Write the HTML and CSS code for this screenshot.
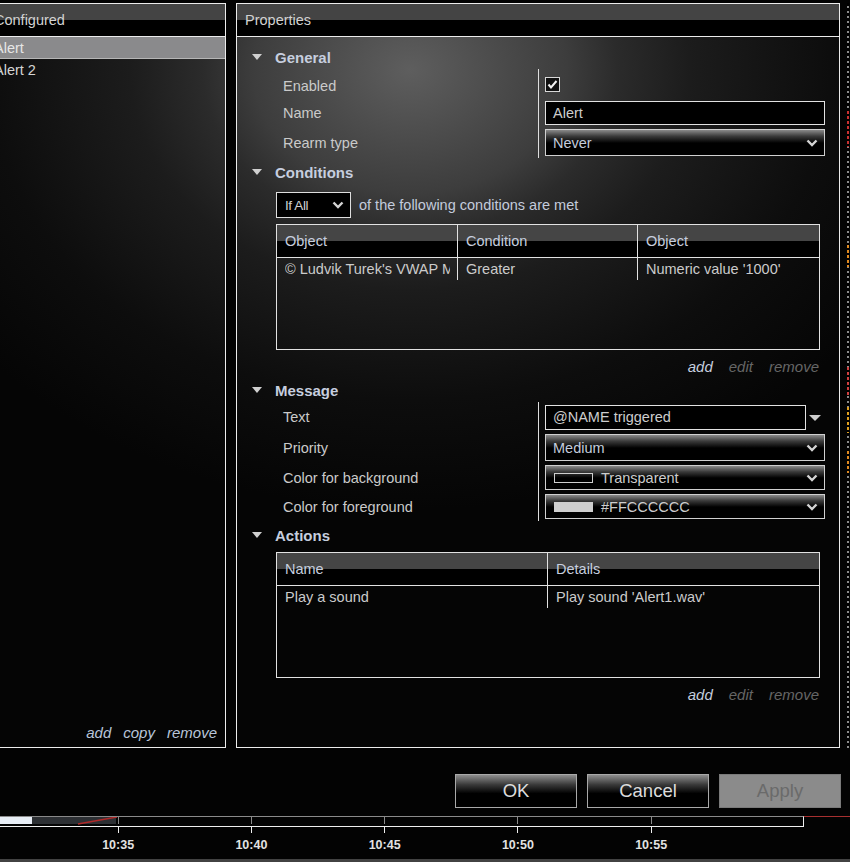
FILE: index.html
```html
<!DOCTYPE html>
<html lang="en">
<head>
<meta charset="UTF-8" />
<meta name="viewport" content="width=device-width, initial-scale=1" />
<title>Alerts</title>
<link rel="stylesheet" href="styles.css">
</head>
<body>

<div class="panels">

  <!-- Configured alerts -->
  <div class="panel list">
    <div class="panel-head">Configured</div>
    <div class="item sel">Alert</div>
    <div class="item">Alert 2</div>
    <div class="list-foot">
      <span>add</span><span>copy</span><span>remove</span>
    </div>
  </div>

  <!-- Properties -->
  <div class="panel props">
    <div class="panel-head">Properties</div>
    <div class="props-body">

      <div class="sec first">General</div>
      <div class="rows">
        <div class="lbl low">Enabled</div>
        <div class="ed tall">
          <span class="check">
            <svg width="13" height="13" viewBox="0 0 13 13"><path d="M2.5 6.5 L5 9.5 L10.5 3" fill="none" stroke="#f2f2f2" stroke-width="2"/></svg>
          </span>
        </div>
        <div class="lbl">Name</div>
        <div class="ed"><div class="input">Alert</div></div>
        <div class="lbl">Rearm type</div>
        <div class="ed">
          <div class="select blue">Never
            <svg class="chev" width="12" height="8" viewBox="0 0 12 8"><polyline points="1.5,1.5 6,6 10.5,1.5" fill="none" stroke="#d4d4d4" stroke-width="2.4"/></svg>
          </div>
        </div>
      </div>

      <div class="sec">Conditions</div>
      <div class="cond-line">
        <div class="mini-select">If All
          <svg class="chev" width="12" height="8" viewBox="0 0 12 8"><polyline points="1.5,1.5 6,6 10.5,1.5" fill="none" stroke="#d4d4d4" stroke-width="2.4"/></svg>
        </div>
        <span class="blue">of the following conditions are met</span>
      </div>
      <div class="tbl">
        <div class="tbl-head three">
          <div class="c">Object</div>
          <div class="c">Condition</div>
          <div class="c">Object</div>
        </div>
        <div class="tbl-row three">
          <div class="c"><span class="clip">© Ludvik Turek's VWAP M</span></div>
          <div class="c">Greater</div>
          <div class="c">Numeric value '1000'</div>
        </div>
      </div>
      <div class="links">
        <span class="on">add</span><span>edit</span><span>remove</span>
      </div>

      <div class="sec">Message</div>
      <div class="rows">
        <div class="lbl">Text</div>
        <div class="ed pad3">
          <div class="input text">@NAME triggered</div>
          <span class="drop"></span>
        </div>
        <div class="lbl">Priority</div>
        <div class="ed">
          <div class="select blue">Medium
            <svg class="chev" width="12" height="8" viewBox="0 0 12 8"><polyline points="1.5,1.5 6,6 10.5,1.5" fill="none" stroke="#d4d4d4" stroke-width="2.4"/></svg>
          </div>
        </div>
        <div class="lbl">Color for background</div>
        <div class="ed">
          <div class="select short"><span class="swatch"></span>Transparent
            <svg class="chev" width="12" height="8" viewBox="0 0 12 8"><polyline points="1.5,1.5 6,6 10.5,1.5" fill="none" stroke="#d4d4d4" stroke-width="2.4"/></svg>
          </div>
        </div>
        <div class="lbl">Color for foreground</div>
        <div class="ed">
          <div class="select short"><span class="swatch full"></span>#FFCCCCCC
            <svg class="chev" width="12" height="8" viewBox="0 0 12 8"><polyline points="1.5,1.5 6,6 10.5,1.5" fill="none" stroke="#d4d4d4" stroke-width="2.4"/></svg>
          </div>
        </div>
      </div>

      <div class="sec">Actions</div>
      <div class="tbl">
        <div class="tbl-head two">
          <div class="c">Name</div>
          <div class="c">Details</div>
        </div>
        <div class="tbl-row two">
          <div class="c">Play a sound</div>
          <div class="c">Play sound 'Alert1.wav'</div>
        </div>
      </div>
      <div class="links">
        <span class="on">add</span><span>edit</span><span>remove</span>
      </div>

    </div>
  </div>

  <!-- chart edge behind the dialog -->
  <div class="edge"></div>
</div>

<div class="buttons">
  <div class="btn">OK</div>
  <div class="btn">Cancel</div>
  <div class="btn off">Apply</div>
</div>

<!-- time axis of the chart -->
<div class="axis">
  <div class="axis-line">
    <svg width="120" height="8" viewBox="0 0 120 8">
      <rect x="0" y="0" width="32" height="7" fill="#e8eef6"/>
      <rect x="32" y="0" width="84" height="7" fill="#2c2f33"/>
      <line x1="78" y1="7" x2="117" y2="0" stroke="#b02828" stroke-width="1.5"/>
    </svg>
  </div>
  <div class="red-line"></div>
  <div class="ticks">
    <div class="tick"><i></i><span>10:35</span></div>
    <div class="tick"><i></i><span>10:40</span></div>
    <div class="tick"><i></i><span>10:45</span></div>
    <div class="tick"><i></i><span>10:50</span></div>
    <div class="tick"><i></i><span>10:55</span></div>
  </div>
</div>
<div class="bottom-bar"></div>

</body>
</html>
```

FILE: styles.css
```css
body {
  margin: 0;
  width: 850px;
  height: 862px;
  overflow: hidden;
  background: #030303;
  color: #cbcbcb;
  font-family: "Liberation Sans", Arial, sans-serif;
  font-size: 14.5px;
}
.blue {
  color: #c3cbdc;
}
/* Paineis */
.panels {
  display: flex;
  padding-top: 3px;
  height: 745px;
}
.panel {
  box-sizing: border-box;
  border: 1px solid #ececec;
  display: flex;
  flex-direction: column;
  background: radial-gradient(ellipse 560px 440px at 410px 70px, #5e5e5e 0%, #3d3d3d 28%, #2b2b2b 37%, #1c1c1c 50%, #0d0d0d 75%, #050505 100%) fixed;
}
.list {
  margin-left: -15px;
  width: 241px;
}
.props {
  margin-left: 10px;
  width: 604px;
}
.panel-head {
  height: 33px;
  box-sizing: border-box;
  border-bottom: 1px solid #ececec;
  background: linear-gradient(#444 50%, #000 50%);
  padding-left: 8px;
  line-height: 32px;
  color: #d2d2d2;
}
.item {
  height: 22px;
  line-height: 22px;
  padding-left: 8px;
  color: #d4d4d4;
}
.item.sel {
  box-sizing: border-box;
  background: #8a8a8c;
  border-bottom: 1px solid #b6b6b6;
  color: #e6e6e6;
}
.list-foot {
  margin-top: auto;
  display: flex;
  justify-content: flex-end;
  gap: 12px;
  padding: 0 8px 5px 0;
  line-height: 18px;
  font-size: 15px;
  font-style: italic;
  color: #b9c5da;
}
/* Propriedades */
.props-body {
  padding-top: 8px;
}
.sec {
  height: 24px;
  display: flex;
  align-items: center;
  margin-top: 2px;
  padding-left: 15px;
  font-size: 15px;
  font-weight: bold;
  color: #c6cedf;
}
.sec.first {
  margin-top: 0;
}
.sec::before {
  content: "";
  border-left: 5.5px solid transparent;
  border-right: 5.5px solid transparent;
  border-top: 6px solid #d0d0d0;
  margin-right: 13px;
}
.rows {
  display: grid;
  grid-template-columns: 255px 1fr;
  margin: 0 14px 0 46px;
}
.lbl {
  display: flex;
  align-items: center;
  color: #cacaca;
}
.lbl.low {
  padding-top: 3px;
}
.ed {
  display: flex;
  align-items: center;
  border-left: 1px solid #dedede;
  padding: 2px 0 2px 6px;
}
.ed.tall {
  height: 30px;
  box-sizing: border-box;
}
.ed.pad3 {
  padding: 3px 0 2px 6px;
}
.check {
  width: 15px;
  height: 15px;
  box-sizing: border-box;
  border: 1px solid #d8d8d8;
  background: #111;
  display: flex;
  align-items: center;
  justify-content: center;
}
.input {
  box-sizing: border-box;
  width: 280px;
  height: 24px;
  border: 1px solid #e2e2e2;
  background: #000;
  padding-left: 7px;
  line-height: 22px;
  color: #cdcdcd;
}
.input.text {
  width: 261px;
  height: 25px;
  line-height: 23px;
}
.drop {
  margin-left: 3px;
  border-left: 6px solid transparent;
  border-right: 6px solid transparent;
  border-top: 6px solid #cdcdcd;
}
.select {
  box-sizing: border-box;
  width: 280px;
  height: 27px;
  border: 1px solid #d0d0d0;
  background: linear-gradient(#8a8a8a 0%, #3a3a3a 25%, #000 52%);
  display: flex;
  align-items: center;
  padding: 0 6px 0 7px;
}
.select.short {
  height: 25px;
  color: #cdcdcd;
}
.chev {
  margin-left: auto;
}
.swatch {
  box-sizing: border-box;
  width: 39px;
  height: 10px;
  border: 1px solid #cfcfcf;
  margin: 0 8px 0 1px;
}
.swatch.full {
  background: #cfcfcf;
}
/* Condicoes */
.cond-line {
  display: flex;
  align-items: center;
  gap: 8px;
  margin: 8px 0 0 39px;
}
.mini-select {
  box-sizing: border-box;
  width: 75px;
  height: 26px;
  border: 1px solid #dedede;
  background: #000;
  display: flex;
  align-items: center;
  padding: 0 6px 0 8px;
  font-size: 13.5px;
  letter-spacing: -0.4px;
  color: #d0d0d0;
}
/* Tabelas */
.tbl {
  box-sizing: border-box;
  width: 544px;
  height: 126px;
  margin: 6px 0 0 39px;
  border: 1px solid #e2e2e2;
}
.sec + .tbl {
  margin-top: 5px;
}
.tbl-head, .tbl-row {
  display: grid;
}
.three {
  grid-template-columns: 181px 180px 1fr;
}
.two {
  grid-template-columns: 271px 1fr;
}
.tbl-head {
  height: 33px;
  box-sizing: border-box;
  border-bottom: 1px solid #e2e2e2;
  background: linear-gradient(#454545 50%, #000 50%);
  color: #c6cedf;
}
.tbl-row {
  height: 22px;
}
.c {
  box-sizing: border-box;
  border-right: 1px solid #e2e2e2;
  padding-left: 8px;
  display: flex;
  align-items: center;
  white-space: nowrap;
  overflow: hidden;
}
.c:last-child {
  border-right: none;
}
.clip {
  display: block;
  width: 165px;
  overflow: hidden;
}
.links {
  display: flex;
  justify-content: flex-end;
  gap: 16px;
  margin: 8px 20px 0 0;
  line-height: 18px;
  font-size: 15px;
  font-style: italic;
  color: #666;
}
.links .on {
  color: #c6cedf;
}
/* Borda do grafico */
.edge {
  width: 10px;
  background:
    repeating-linear-gradient(#c83030 0 3px, #000 3px 5px) 7px 108px / 2px 36px no-repeat,
    repeating-linear-gradient(#e08a20 0 3px, #000 3px 5px) 7px 242px / 2px 22px no-repeat,
    repeating-linear-gradient(#d04040 0 3px, #000 3px 5px) 7px 364px / 2px 28px no-repeat,
    repeating-linear-gradient(#e0a020 0 3px, #000 3px 5px) 7px 404px / 2px 26px no-repeat,
    repeating-linear-gradient(#e08a20 0 3px, #000 3px 5px) 7px 448px / 2px 22px no-repeat,
    repeating-linear-gradient(#000 0 3px, #8a8a8a 3px 5px) 7px 0 / 2px 100% no-repeat;
}
/* Botoes */
.buttons {
  display: flex;
  justify-content: flex-end;
  gap: 10px;
  margin: 26px 9px 0 0;
}
.btn {
  box-sizing: border-box;
  width: 122px;
  height: 34px;
  border: 1px solid #a9a9a9;
  background: linear-gradient(#8e8e8e 0%, #3a3a3a 30%, #000 58%);
  color: #dcdcdc;
  font-size: 18.5px;
  display: flex;
  align-items: center;
  justify-content: center;
}
.btn.off {
  background: #8b8b8b;
  border-color: #7a7a7a;
  color: #6a6a6a;
}
/* Eixo */
.axis {
  position: relative;
  height: 43px;
  margin-top: 8px;
}
.axis-line {
  box-sizing: border-box;
  width: 804px;
  height: 11px;
  border-top: 1px solid #8a8a8a;
  border-bottom: 1px solid #efefef;
  border-right: 1px solid #efefef;
}
.axis-line svg {
  display: block;
}
.red-line {
  position: absolute;
  left: 804px;
  top: 0;
  width: 46px;
  height: 1px;
  background: #a83030;
}
.ticks {
  position: absolute;
  top: 0;
  left: 0;
  display: flex;
  padding-left: 51.5px;
}
.tick {
  width: 133.25px;
  display: flex;
  flex-direction: column;
  align-items: center;
}
.tick::before {
  content: "";
  width: 1px;
  height: 7px;
  margin-top: 1px;
  background: #8a8a8a;
}
.tick i {
  width: 1px;
  height: 6px;
  margin-top: 3px;
  background: #efefef;
}
.tick span {
  margin-top: 5px;
  line-height: 14px;
  font-size: 12.5px;
  font-weight: bold;
  color: #e2e2e2;
}
.bottom-bar {
  height: 3px;
  background: #424242;
}
```
